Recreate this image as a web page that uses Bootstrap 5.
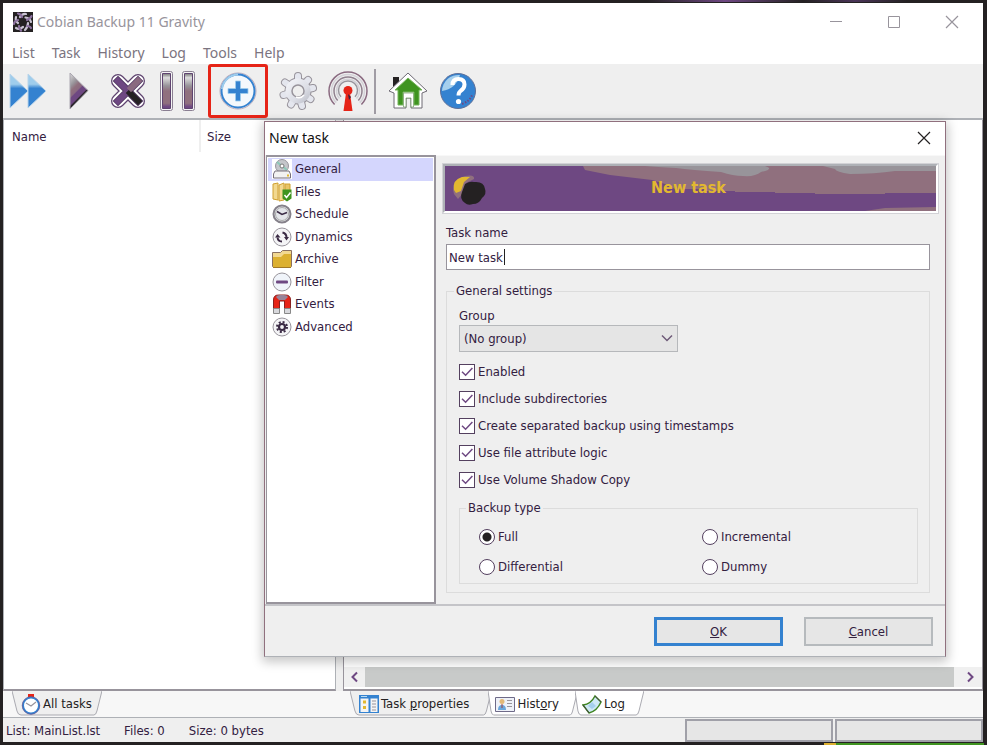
<!DOCTYPE html>
<html lang="en">
<head>
<meta charset="utf-8">
<meta name="viewport" content="width=device-width, initial-scale=1">
<title>Cobian Backup 11 Gravity</title>
<link href="https://cdn.jsdelivr.net/npm/bootstrap@5.3.0/dist/css/bootstrap.min.css" rel="stylesheet">
<style>
:root{--ink:#33203f;--face:#efefef;--edge:#98949c;--line:#aeb1b6;--purple:#6e4882;--blue:#3482d0}
body{background:linear-gradient(90deg,#242122,#6e4882 30%,#242122 60%,#4a3558 80%,#242122) right 80px top/260px 2px no-repeat,linear-gradient(90deg,#dcb030 12px,#3f9420 12px) right 3px bottom/160px 2px no-repeat,#242122;min-height:100vh;padding:3px 4px 3px 3px;font-family:"DejaVu Sans Condensed","Noto Sans",sans-serif;font-size:13px;line-height:18px;color:var(--ink)}
button{font:inherit;color:inherit}
.app-window{min-height:calc(100vh - 6px);background:#fff}
.caption-font{font-family:"Noto Sans","Open Sans",sans-serif}
.app-title{height:39px;padding:0 21px 1px 10px;font-size:14px;color:#98949c}
.win-btn{width:20px;height:20px}
.app-title .controls{gap:38px}
.menu-strip{height:22px;padding-left:9px;gap:17px;font-size:14px}
.menu-strip a{color:#7b7480;text-decoration:none}
.tool-strip{height:54px;background:var(--face);padding-left:5px;gap:10px}
.tool-btn{width:40px;height:44px}
.tool-btn.marked{width:60px;height:54px;border:3px solid #e62417;border-radius:3px}
.tool-sep{width:2px;height:45px;background:#a09ca4;margin:0 2px 0 -4px}
.work-area{border-top:2px solid var(--line);background:var(--face)}
.pane-left{width:333px;background:#fff;border:1px solid var(--line);border-bottom:2px solid var(--edge);border-top:0}
.pane-right{background:#fff;border:1px solid var(--edge);border-bottom:2px solid var(--edge);border-top:0;margin-left:7px}
.task-list th{font-weight:400;padding:7px 0 5px 8px;line-height:20px}
.task-list th+th{border-left:2px solid #efefef;padding-left:6px}
.task-list th:first-child{width:196px}
.scroll-row{height:20px;background:#f0f0f0;margin-bottom:2px}
.scroll-row button{width:21px;height:20px}
.scroll-thumb{background:#c8cac9}
.scroll-row button:last-child{width:28px}
.tab-strip{height:26px;background:#f7f7f7}
.tabs-left{width:333px;padding-left:9px}
.tabs-right{margin-left:7px;padding-left:7px}
.sheet-tab{height:25px;padding:0 10px 0 9px;gap:2px;margin-right:-3px;font-size:13px;line-height:18px;color:#242122}
.sheet-tab svg{flex:none}
.sheet-tab .shape{inset:0;width:100%;height:100%}
.sheet-tab span,.sheet-tab .glyph{position:relative}
.tabs-right .sheet-tab{padding-right:22px}
.tabs-right .sheet-tab+.sheet-tab{padding-left:7px;padding-right:19px}
.status-strip{height:25px;background:var(--face);border-top:1px solid var(--line);padding-left:3px;gap:24px}
.status-strip span{padding-top:2px}
.status-cell{width:148px;height:23px;background:#e6e6e6;border:2px solid #a0a0a8}
.status-cell+.status-cell{margin-left:2px}
.dialog-box{left:261px;right:37px;top:118px;background:var(--face);border:1px solid #90707e;border-bottom-color:var(--line);box-shadow:0 3px 10px 2px rgba(0,0,0,.22)}
.dialog-head{height:33px;background:#fff;padding:0 11px 2px 4px;font-size:14px;color:#111}
.side-nav{width:170px;background:#fff;border:2px solid var(--edge);border-left-width:1px;margin-left:1px}
.side-nav ul{height:180px;margin:1px 1px 0}
.side-nav a{color:inherit;text-decoration:none;padding-left:4px;gap:3px}
.side-nav .current{background:#d4d6fd}
.dialog-main{padding:8px 7px 11px 7px;border-top:1px solid #f8f8f8}
.banner{height:49px;border:2px solid #fff;border-top-color:var(--line);border-left-color:var(--line);outline:1px solid #d2d2d6;background:var(--purple)}
.banner svg{inset:0;width:100%;height:100%}
.banner h1{font-size:16px;line-height:20px;font-weight:700;color:#e2b830;padding:0 4px 2px 0}
.form-area{padding:11px 8px 0 3px}
.name-box{height:26px;border:1px solid var(--edge);outline:0;padding:0 2px;color:inherit;caret-color:transparent;background:linear-gradient(#222,#222) 57px center/1px 16px no-repeat #fff;margin-top:2px}
fieldset.group-box{border:1px solid #dcdcdc}
.group-box>legend{font-size:13px;line-height:18px;padding:0 2px;margin:0 0 0 6px}
.settings{margin-top:12px;padding:0 11px 8px 12px}
.settings>legend{margin:0 0 7px -5px}
.group-select{width:219px;height:27px;border:1px solid #b6b8bb;background:#e5e5e5;color:inherit;padding:0 5px 0 4px;appearance:none;border-radius:0}
.select-wrap svg{right:4px;top:7px;pointer-events:none}
.tick-list{margin:6px 0}
.tick-row{height:27px;gap:3px}
.tick-row input{appearance:none;width:16px;height:16px;margin:0;border:1px solid #54405f;background:#fff}
.tick-row input[type=checkbox]:checked{background:#fff url("data:image/svg+xml,%3Csvg xmlns='http://www.w3.org/2000/svg' viewBox='0 0 14 14'%3E%3Cpath d='M2 6.8l3.6 3.5L12.4 3' fill='none' stroke='%236e4882' stroke-width='1.5'/%3E%3C/svg%3E") center/14px no-repeat}
.tick-row input[type=radio]{border-radius:50%}
.tick-row input[type=radio]:checked{background:radial-gradient(circle,#242122 4px,#fff 5px)}
.types{padding:5px 0 1px 11px}
.types .tick-row{height:30px;padding-left:8px}
.dialog-foot{border-top:2px solid #c4c4c8;padding:11px 12px 10px;gap:21px}
.dlg-btn{width:129px;height:29px;background:#e6e6e6;border:2px solid #b6babd}
.dlg-btn.primary{border:3px solid var(--blue)}
</style>
<script src="https://cdn.jsdelivr.net/npm/bootstrap@5.3.0/dist/js/bootstrap.bundle.min.js"></script>
</head>
<body>
<svg width="0" height="0" class="position-absolute" aria-hidden="true">
<defs>
<linearGradient id="gBlue" x1="0" y1="0" x2="0" y2="1"><stop offset=".3" stop-color="#9fcdec"/><stop offset=".42" stop-color="#3482d0"/></linearGradient>
<linearGradient id="gPlum" x1="0" y1="0" x2=".5" y2="1"><stop offset="0" stop-color="#ddd"/><stop offset=".3" stop-color="#98949a"/><stop offset=".42" stop-color="#90707e"/><stop offset=".54" stop-color="#8a6a80"/><stop offset=".58" stop-color="#6e4882"/><stop offset=".72" stop-color="#6e4882"/><stop offset=".76" stop-color="#242122"/></linearGradient>
<linearGradient id="gBar" x1="0" y1="0" x2="0" y2="1"><stop offset="0" stop-color="#777"/><stop offset=".12" stop-color="#ddd"/><stop offset=".35" stop-color="#98949a"/><stop offset=".5" stop-color="#90707e"/><stop offset=".85" stop-color="#90707e"/><stop offset=".95" stop-color="#6e4882"/></linearGradient>
<linearGradient id="gGear" x1="0" y1="0" x2="1" y2="1"><stop offset="0" stop-color="#f6f7fb"/><stop offset=".6" stop-color="#dcdee6"/><stop offset="1" stop-color="#b8bac4"/></linearGradient>
</defs></svg>

<div class="app-window position-relative d-flex flex-column">
  <header class="app-title caption-font d-flex align-items-center justify-content-between">
    <div class="d-flex align-items-center gap-1">
      <svg width="20" height="20" viewBox="0 0 20 20"><path fill="#242122" d="M0 0h20v20H0z"/><g fill="none" stroke-width="2.200" stroke-linecap="round"><g stroke="#c9c3d2"><path d="M7 5Q9 1.500 13 2"/><path d="M12.500 5.500Q17 6 18 10"/><path d="M15 11Q15 15 12 18"/><path d="M10 15Q6 18 3 16"/><path d="M5 11Q2 9 3 5"/></g><g stroke="#8d72a0"><path d="M14 8Q18 6 18.500 4"/><path d="M14 14Q17 14 18 16"/><path d="M6 14Q6 17 8 18.500"/><path d="M5 8Q1 9 1 12"/><path d="M9 5Q8 2 5 1.500"/></g></g></svg>
      <span>Cobian Backup 11 Gravity</span>
    </div>
    <div class="controls d-flex">
      <button class="win-btn btn p-0 border-0 d-flex" aria-label="Minimize"><svg width="20" height="20" fill="none" stroke="#98949c"><path d="M4 9.500h12"/></svg></button>
      <button class="win-btn btn p-0 border-0 d-flex" aria-label="Maximize"><svg width="20" height="20" fill="none" stroke="#98949c"><path d="M4.500 4.500h11v11h-11z"/></svg></button>
      <button class="win-btn btn p-0 border-0 d-flex" aria-label="Close"><svg width="20" height="20" fill="none" stroke="#98949c" stroke-width="1.200"><path d="M4 4l12 12M16 4L4 16"/></svg></button>
    </div>
  </header>
  <nav class="menu-strip caption-font d-flex align-items-center" aria-label="Main menu">
    <a href="#">List</a><a href="#">Task</a><a href="#">History</a><a href="#">Log</a><a href="#">Tools</a><a href="#">Help</a>
  </nav>
  <div class="tool-strip d-flex align-items-center" role="toolbar" aria-label="Tools">
    <button class="tool-btn btn p-0 border-0" aria-label="Run all"><svg width="40" height="40" viewBox="0 0 40 40"><path d="M2 3l18 17L2 37zM20 3l18 17-18 17z" fill="url(#gBlue)" stroke="#b8d4ea"/></svg></button>
    <button class="tool-btn btn p-0 border-0" aria-label="Run selected"><svg width="40" height="40" viewBox="0 0 40 40"><path d="M12 2l18 17.500L12 38z" fill="url(#gPlum)" stroke="#aaa6b0"/></svg></button>
    <button class="tool-btn btn p-0 border-0" aria-label="Abort"><svg width="40" height="40" viewBox="0 0 40 40" fill="none" stroke-linecap="round"><path d="M10 10l20 20M30 10L10 30" stroke="#5f4470" stroke-width="14"/><path d="M10 10l20 20M30 10L10 30" stroke="#fff" stroke-width="11.500"/><path d="M10 10l20 20M30 10L10 30" stroke="#4f385e" stroke-width="7.500" stroke-linecap="square"/><path d="M10 10l20 20M30 10L10 30" stroke="#6e4882" stroke-width="6" stroke-linecap="square"/><path d="M22 22l8 8" stroke="#242122" stroke-width="6" stroke-linecap="square"/><path d="M23 17l7-7" stroke="#8a6a80" stroke-width="6" stroke-linecap="square"/></svg></button>
    <button class="tool-btn btn p-0 border-0" aria-label="Pause"><svg width="40" height="42" viewBox="0 0 40 42"><g fill="#f4f4f4" stroke="#8a7f92"><rect x="2.500" y="1.500" width="12" height="39" rx="2"/><rect x="24.500" y="1.500" width="12" height="39" rx="2"/></g><g fill="url(#gBar)" stroke="#5f4470"><path d="M4.500 3.500h8v35h-8zM26.500 3.500h8v35h-8z"/></g></svg></button>
    <button class="tool-btn marked btn p-0" aria-label="New task"><svg width="40" height="40" viewBox="0 0 40 40"><circle cx="20" cy="20" r="18" fill="#f4f8fc" stroke="#b7a9ba"/><circle cx="20" cy="20" r="16.500" fill="none" stroke="#3482d0" stroke-width="2"/><path d="M4 18A16.500 16.500 0 0120 3.500" fill="none" stroke="#9fcdec" stroke-width="2"/><path d="M17.500 10h5v7.500H30v5h-7.500V30h-5v-7.500H10v-5h7.500z" fill="#3482d0" stroke="#9fcdec" stroke-width=".8"/></svg></button>
    <button class="tool-btn btn p-0 border-0" aria-label="Options"><svg width="40" height="40" viewBox="0 0 40 40"><g fill="none" stroke-linecap="round"><path d="M20 20V5M20 20l10-11M20 20l15-3M20 20l12.500 8M20 20l4 15M20 20l-7 13.500M20 20L5.500 24M20 20L7 11.500" stroke="#98949c" stroke-width="8"/><circle cx="20" cy="20" r="13.500" fill="#98949c"/><path d="M20 20V5M20 20l10-11M20 20l15-3M20 20l12.500 8M20 20l4 15M20 20l-7 13.500M20 20L5.500 24M20 20L7 11.500" stroke="#e4e6ee" stroke-width="6"/></g><circle cx="20" cy="20" r="12.500" fill="url(#gGear)"/><circle cx="20" cy="20" r="6" fill="#efefef" stroke="#98949c" stroke-width="1.500"/><path d="M26 24a7 7 0 01-8 2" fill="none" stroke="#fff" stroke-width="1.500"/></svg></button>
    <button class="tool-btn btn p-0 border-0" aria-label="Remote"><svg width="40" height="42" viewBox="1 0 40 42"><g fill="none" stroke-width="1.500"><path stroke="#8a6a80" d="M7.600 34.500A19 19 0 1134.400 34.500"/><path stroke="#d4d2d8" d="M9.300 32.600A16.500 16.500 0 1132.700 32.600"/><path stroke="#90808e" d="M10.700 30.500A14 14 0 1131.300 30.500"/><path stroke="#d4d2d8" d="M12.500 28.500A11.500 11.500 0 1129.500 28.500"/><path stroke="#98949c" d="M14 26.800A9.500 9.500 0 1128 26.800"/></g><path d="M19 23h4l2.500 18h-9z" fill="#e62417"/><circle cx="21" cy="20.500" r="4.500" fill="#e62417"/><path d="M21 24l3 3-2 3z" fill="#3a2040"/></svg></button>
    <span class="tool-sep"></span>
    <button class="tool-btn btn p-0 border-0" aria-label="Home page"><svg width="40" height="40" viewBox="0 0 40 40"><path d="M5 6h6v10H5z" fill="#242122"/><path d="M20 2L1 20l5 2v15h12V27h5v10h11V22l5-2z" fill="#fff" stroke="#6e6a74"/><path d="M20 7L7 19h3v15h5V21h11v13h5V19h3z" fill="#3f9420" stroke="#76b45c"/><path d="M15.500 22h10v14h-2.500v-9h-5v9h-2.500z" fill="#fff" stroke="#6e9a60" stroke-width=".7"/></svg></button>
    <button class="tool-btn btn p-0 border-0" aria-label="Help"><svg width="40" height="40" viewBox="0 0 40 40"><circle cx="20" cy="20" r="17.500" fill="#3482d0" stroke="#5f6f98"/><path d="M4 20A16.500 16.500 0 0122 4q-4 14-18 16z" fill="#a5cfed"/><path d="M14.500 14q0-6 6-6t6 5.500q0 4-4 6.500-2 1.500-2 4.500" fill="none" stroke="#fff" stroke-width="4"/><circle cx="20.500" cy="30.500" r="2.600" fill="#fff"/><path d="M24 33q8-3 10-9" fill="none" stroke="#6e4882" stroke-dasharray="1.500 1.500" stroke-width="2"/></svg></button>
  </div>

  <main class="work-area d-flex flex-fill">
    <section class="pane-left" aria-label="Task list">
      <table class="task-list w-100"><thead><tr><th scope="col">Name</th><th scope="col">Size</th></tr></thead></table>
    </section>
    <section class="pane-right flex-fill d-flex flex-column justify-content-end" aria-label="Details">
      <div class="scroll-row d-flex">
        <button class="btn p-0 border-0 d-flex" aria-label="Scroll left"><svg width="21" height="20" fill="none" stroke="#6e4882" stroke-width="2"><path d="M13 5.500L8.500 10l4.500 4.500"/></svg></button>
        <div class="scroll-thumb flex-fill"></div>
        <button class="btn p-0 border-0 d-flex" aria-label="Scroll right"><svg width="28" height="20" fill="none" stroke="#6e4882" stroke-width="2"><path d="M14 5.500l4.500 4.500-4.500 4.500"/></svg></button>
      </div>
    </section>
  </main>

  <div class="tab-strip d-flex">
    <div class="tabs-left d-flex">
      <button class="sheet-tab btn border-0 position-relative d-flex align-items-center">
        <svg class="shape position-absolute" viewBox="0 0 90 25" preserveAspectRatio="none"><path d="M0 0l5 20q1 4 4 4h73q2 0 3-4l5-20" fill="#efefef" stroke="#a9a9b0"/></svg>
        <svg class="glyph" width="20" height="22" viewBox="0 0 20 22"><path d="M7 1h6v3H7z" fill="#e62417"/><circle cx="10" cy="12.500" r="8" fill="#fff" stroke="#3482d0" stroke-width="2"/><circle cx="10" cy="12.500" r="8.800" fill="none" stroke="#6e4882" stroke-width=".6"/><path d="M5 10l5 3 5-4" fill="none" stroke="#98949c" stroke-width="1.200"/></svg>
        <span>All tasks</span>
      </button>
    </div>
    <div class="tabs-right d-flex flex-fill">
      <button class="sheet-tab btn border-0 position-relative d-flex align-items-center">
        <svg class="shape position-absolute" viewBox="0 0 142 25" preserveAspectRatio="none"><path d="M0 0l5 20q1 4 4 4h125q2 0 3-4l5-20" fill="#efefef" stroke="#a9a9b0"/></svg>
        <svg class="glyph" width="20" height="20" viewBox="0 0 20 20"><path d="M0 1h20v18H0z" fill="#3482d0"/><path d="M1.500 4.500h8V18h-8zM11.500 4.500h7V18h-7z" fill="#f4f4f4"/><path d="M4 6.500h3v3H4zM4 12h3v3H4z" fill="#e2b830"/><path d="M13 7h4M13 10h4M13 13h4M13 16h4" stroke="#98949c"/><path d="M2 2.500h6" stroke="#b8dcf4"/></svg>
        <span>Task <u>p</u>roperties</span>
      </button>
      <button class="sheet-tab btn border-0 position-relative d-flex align-items-center">
        <svg class="shape position-absolute" viewBox="0 0 89 25" preserveAspectRatio="none"><path d="M0 0l3 20q1 4 3 4h75q2 0 3-4l5-20" fill="#fff" stroke="#a9a9b0"/></svg>
        <svg class="glyph" width="20" height="20" viewBox="0 0 20 20"><path d="M.5 3.500h19v14H.5z" fill="#eef1f8" stroke="#6e6a88"/><circle cx="7" cy="7.500" r="2.500" fill="#e2b877"/><path d="M3 16q0-5 4-5t4 5z" fill="#6aa6dc"/><path d="M12 6.500h5M12 9.500h5M12 12.500h5" stroke="#98949c"/><path d="M7 10v4" stroke="#a04040"/></svg>
        <span>Hist<u>o</u>ry</span>
      </button>
      <button class="sheet-tab btn border-0 position-relative d-flex align-items-center">
        <svg class="shape position-absolute" viewBox="0 0 70 25" preserveAspectRatio="none"><path d="M0 0l3 20q1 4 3 4h56q2 0 3-4l5-20" fill="#fff" stroke="#a9a9b0"/></svg>
        <svg class="glyph" width="20" height="20" viewBox="0 0 20 20"><path d="M1 11q8-1 12-9l6 6q-4 9-12 11z" fill="#cfe8f6" stroke="#3f8420" stroke-width="1.500"/><path d="M1 11q3 4 6 8M13 2l6 6" stroke="#444" fill="none"/><path d="M6 12l4-4 4 4-4 3z" fill="#a5cfed"/></svg>
        <span>Lo<u>g</u></span>
      </button>
    </div>
  </div>

  <footer class="status-strip d-flex align-items-center">
    <span>List: MainList.lst</span><span>Files: 0</span><span>Size: 0 bytes</span>
    <div class="ms-auto d-flex"><div class="status-cell"></div><div class="status-cell"></div></div>
  </footer>

  <div class="dialog-box position-absolute" role="dialog" aria-labelledby="dlgTitle">
    <div class="dialog-head caption-font d-flex align-items-center justify-content-between">
      <span id="dlgTitle">New task</span>
      <button class="win-btn btn p-0 border-0 d-flex" aria-label="Close dialog"><svg width="20" height="20" fill="none" stroke="#242122" stroke-width="1.200"><path d="M4 4l12 12M16 4L4 16"/></svg></button>
    </div>
    <div class="d-flex">
      <nav class="side-nav" aria-label="Task sections">
        <ul class="list-unstyled d-flex flex-column">
          <li class="d-flex flex-fill current"><a href="#" class="d-flex align-items-center flex-fill"><svg width="20" height="20" viewBox="0 0 20 20"><path fill="#fff" d="M0 0h20v20H0z"/><circle cx="10" cy="7" r="6.500" fill="#c4c6ca" stroke="#98949c"/><path d="M10 7L5 3M10 7l5 4" stroke="#8cc8b8" stroke-width="2"/><circle cx="10" cy="7" r="2" fill="#fff" stroke="#777"/><path d="M3 12h14l1.500 3v4h-17v-4z" fill="#f2f2f2" stroke="#77707c"/><path d="M15 15.500h2v2h-2z" fill="#e2b830"/></svg>General</a></li>
          <li class="d-flex flex-fill"><a href="#" class="d-flex align-items-center flex-fill"><svg width="20" height="20" viewBox="0 0 20 20"><path d="M1 2l5-1v17l-5-1zM7 3l5-2v17l-5 1z" fill="#f2d890" stroke="#d0a030"/><path d="M13 2h5v15h-5z" fill="#e8c468" stroke="#d0a030"/><path d="M10.500 7.500h9v9l-4.500 3-4.500-3z" fill="#3f9420"/><path d="M12.500 13l2 2.500 4-5" fill="none" stroke="#fff" stroke-width="1.500"/></svg>Files</a></li>
          <li class="d-flex flex-fill"><a href="#" class="d-flex align-items-center flex-fill"><svg width="20" height="20" viewBox="0 0 20 20"><circle cx="10" cy="10" r="8.500" fill="#e4e6ea" stroke="#85818a" stroke-width="2"/><circle cx="10" cy="10" r="6.500" fill="none" stroke="#aaa"/><path d="M5 7.500l5 3 5-2" fill="none" stroke="#3a2a44" stroke-width="1.500"/></svg>Schedule</a></li>
          <li class="d-flex flex-fill"><a href="#" class="d-flex align-items-center flex-fill"><svg width="20" height="20" viewBox="0 0 20 20"><circle cx="10" cy="10" r="9" fill="#f4f4f6" stroke="#98949c"/><path d="M10 14.500q-4 0-4.500-4M10.500 5.500q4 1 4 5" fill="none" stroke="#3a2a44" stroke-width="2"/><path d="M3 10.500h5.500L5.500 7zM12 10h5l-2.500 3.500z" fill="#3a2a44"/></svg>Dynamics</a></li>
          <li class="d-flex flex-fill"><a href="#" class="d-flex align-items-center flex-fill"><svg width="20" height="20" viewBox="0 0 20 20"><path d="M.5 3.500h8l2-2h9v16H.5z" fill="#f2d890" stroke="#8a7060"/><path d="M1 8h8l3-3h7v13H1z" fill="#dcb030"/><path d="M1 18.500h18" stroke="#a07828"/></svg>Archive</a></li>
          <li class="d-flex flex-fill"><a href="#" class="d-flex align-items-center flex-fill"><svg width="20" height="20" viewBox="0 0 20 20"><circle cx="10" cy="10" r="9" fill="#f0f4fa" stroke="#98949c"/><rect x="4" y="8.500" width="12" height="3" rx="1" fill="#6e4882"/></svg>Filter</a></li>
          <li class="d-flex flex-fill"><a href="#" class="d-flex align-items-center flex-fill"><svg width="20" height="20" viewBox="0 0 20 20"><path d="M1.500 15V6q0-5 5-5h7q5 0 5 5v9h-6V7h-5v8z" fill="#e62417" stroke="#8a2020"/><path d="M4 3q1-2 4-2h4q3 0 4 2l-3 3H7z" fill="#98849a"/><path d="M1.500 14.500h6v5h-6zM12.500 14.500h6v5h-6z" fill="#d8d8dc" stroke="#888"/></svg>Events</a></li>
          <li class="d-flex flex-fill"><a href="#" class="d-flex align-items-center flex-fill"><svg width="20" height="20" viewBox="0 0 20 20"><circle cx="10" cy="10" r="9" fill="#f4f4f6" stroke="#98949c"/><circle cx="10" cy="10" r="5" fill="none" stroke="#3a2a44" stroke-width="2" stroke-dasharray="2 1.930"/><circle cx="10" cy="10" r="3" fill="none" stroke="#3a2a44" stroke-width="2.200"/></svg>Advanced</a></li>
        </ul>
      </nav>
      <div class="dialog-main flex-fill">
        <div class="banner position-relative d-flex align-items-center justify-content-center">
          <svg class="position-absolute" viewBox="0 0 491 45" preserveAspectRatio="none"><path d="M138 0H491V27H440v1h-70v-1H330v-1H290v-1H260v-2H230l-10-5-13-4-42-5-25-5z" fill="#90707e"/><path d="M200 0H320q10 3-4 6-6 5-18 4-10 0-22-4-30-2-45-4-20-1-31-2zM378 0H491V5H450q-20 3-45 3-14-2-15-5z" fill="#98949a"/><path d="M420 45l20-3 51-1v4z" fill="#90707e"/><path d="M9 28Q5 14 20 10q10-2 9 3l-8 4-3 10-5 6z" fill="#90707e"/><path d="M9 24Q7 14 17 11l8 0-6 5-3 9-5 2z" fill="#e2b830"/><path d="M20 18q5-3 9-2 10-1 11 7 2 5-3 9-3 6-9 6-5 2-8-1-6-4-3-11z" fill="#242122"/></svg>
          <h1 class="position-relative m-0">New task</h1>
        </div>
        <form class="form-area">
          <label for="taskName" class="d-block">Task name</label>
          <input id="taskName" class="name-box w-100 d-block" type="text" value="New task">
          <fieldset class="group-box settings">
            <legend class="float-none w-auto">General settings</legend>
            <label for="groupSel" class="d-block">Group</label>
            <div class="select-wrap position-relative d-inline-block align-top"><select id="groupSel" class="group-select"><option>(No group)</option></select><svg class="position-absolute" width="14" height="12" fill="none" stroke="#6e5a78" stroke-width="1.500"><path d="M2 3.500l5 5 5-5"/></svg></div>
            <div class="tick-list">
              <div class="tick-row d-flex align-items-center"><input type="checkbox" id="c1" checked><label for="c1">Enabled</label></div>
              <div class="tick-row d-flex align-items-center"><input type="checkbox" id="c2" checked><label for="c2">Include subdirectories</label></div>
              <div class="tick-row d-flex align-items-center"><input type="checkbox" id="c3" checked><label for="c3">Create separated backup using timestamps</label></div>
              <div class="tick-row d-flex align-items-center"><input type="checkbox" id="c4" checked><label for="c4">Use file attribute logic</label></div>
              <div class="tick-row d-flex align-items-center"><input type="checkbox" id="c5" checked><label for="c5">Use Volume Shadow Copy</label></div>
            </div>
            <fieldset class="group-box">
              <legend class="float-none w-auto">Backup type</legend>
              <div class="types row g-0">
                <div class="tick-row col-6 d-flex align-items-center"><input type="radio" name="kind" id="r1" checked><label for="r1">Full</label></div>
                <div class="tick-row col-6 d-flex align-items-center"><input type="radio" name="kind" id="r2"><label for="r2">Incremental</label></div>
                <div class="tick-row col-6 d-flex align-items-center"><input type="radio" name="kind" id="r3"><label for="r3">Differential</label></div>
                <div class="tick-row col-6 d-flex align-items-center"><input type="radio" name="kind" id="r4"><label for="r4">Dummy</label></div>
              </div>
            </fieldset>
          </fieldset>
        </form>
      </div>
    </div>
    <div class="dialog-foot d-flex justify-content-end">
      <button class="dlg-btn primary p-0"><u>O</u>K</button>
      <button class="dlg-btn p-0"><u>C</u>ancel</button>
    </div>
  </div>
</div>
</body>
</html>
